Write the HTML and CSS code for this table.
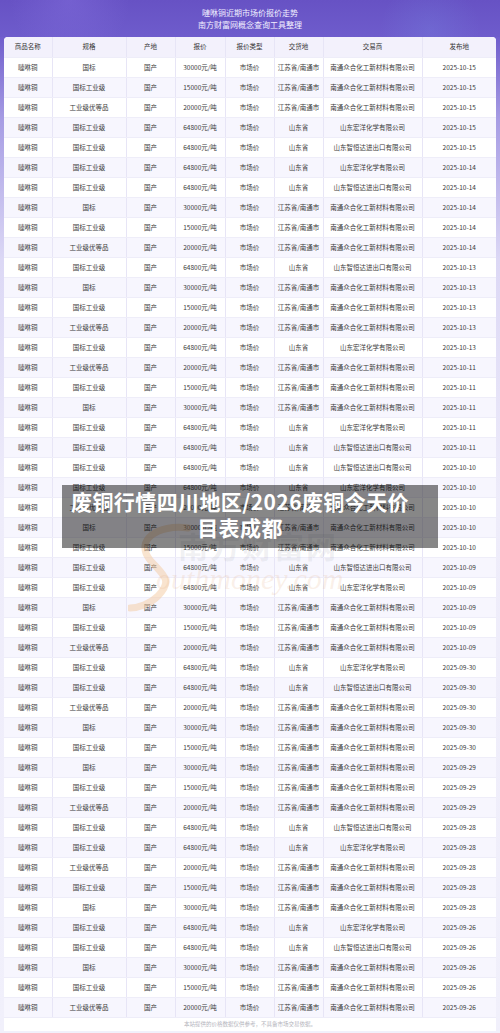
FILE: index.html
```html
<!DOCTYPE html>
<html lang="zh-CN">
<head>
<meta charset="utf-8">
<title>嗹咻铜近期市场价报价走势</title>
<link rel="stylesheet" href="styles.css">
</head>
<body>
<div class="page">
  <header class="hero">
    <div class="hero-line">嗹咻铜近期市场价报价走势</div>
    <div class="hero-line">南方财富网概念查询工具整理</div>
  </header>
  <section class="card">
    <table class="grid">
      <colgroup>
        <col class="c1"><col class="c2"><col class="c3"><col class="c4"><col class="c5"><col class="c6"><col class="c7"><col class="c8">
      </colgroup>
      <thead>
        <tr><th>商品名称</th><th>规格</th><th>产地</th><th>报价</th><th>报价类型</th><th>交货地</th><th>交易商</th><th>发布地</th></tr>
      </thead>
      <tbody>
        <tr><td>嗹咻铜</td><td>国标</td><td>国产</td><td>30000元/吨</td><td>市场价</td><td>江苏省/南通市</td><td>南通众合化工新材料有限公司</td><td>2025-10-15</td></tr>
        <tr><td>嗹咻铜</td><td>国标工业级</td><td>国产</td><td>15000元/吨</td><td>市场价</td><td>江苏省/南通市</td><td>南通众合化工新材料有限公司</td><td>2025-10-15</td></tr>
        <tr><td>嗹咻铜</td><td>工业级优等品</td><td>国产</td><td>20000元/吨</td><td>市场价</td><td>江苏省/南通市</td><td>南通众合化工新材料有限公司</td><td>2025-10-15</td></tr>
        <tr><td>嗹咻铜</td><td>国标工业级</td><td>国产</td><td>64800元/吨</td><td>市场价</td><td>山东省</td><td>山东宏洋化学有限公司</td><td>2025-10-15</td></tr>
        <tr><td>嗹咻铜</td><td>国标工业级</td><td>国产</td><td>64800元/吨</td><td>市场价</td><td>山东省</td><td>山东智恒达进出口有限公司</td><td>2025-10-15</td></tr>
        <tr><td>嗹咻铜</td><td>国标工业级</td><td>国产</td><td>64800元/吨</td><td>市场价</td><td>山东省</td><td>山东宏洋化学有限公司</td><td>2025-10-14</td></tr>
        <tr><td>嗹咻铜</td><td>国标工业级</td><td>国产</td><td>64800元/吨</td><td>市场价</td><td>山东省</td><td>山东智恒达进出口有限公司</td><td>2025-10-14</td></tr>
        <tr><td>嗹咻铜</td><td>国标</td><td>国产</td><td>30000元/吨</td><td>市场价</td><td>江苏省/南通市</td><td>南通众合化工新材料有限公司</td><td>2025-10-14</td></tr>
        <tr><td>嗹咻铜</td><td>国标工业级</td><td>国产</td><td>15000元/吨</td><td>市场价</td><td>江苏省/南通市</td><td>南通众合化工新材料有限公司</td><td>2025-10-14</td></tr>
        <tr><td>嗹咻铜</td><td>工业级优等品</td><td>国产</td><td>20000元/吨</td><td>市场价</td><td>江苏省/南通市</td><td>南通众合化工新材料有限公司</td><td>2025-10-14</td></tr>
        <tr><td>嗹咻铜</td><td>国标工业级</td><td>国产</td><td>64800元/吨</td><td>市场价</td><td>山东省</td><td>山东智恒达进出口有限公司</td><td>2025-10-13</td></tr>
        <tr><td>嗹咻铜</td><td>国标</td><td>国产</td><td>30000元/吨</td><td>市场价</td><td>江苏省/南通市</td><td>南通众合化工新材料有限公司</td><td>2025-10-13</td></tr>
        <tr><td>嗹咻铜</td><td>国标工业级</td><td>国产</td><td>15000元/吨</td><td>市场价</td><td>江苏省/南通市</td><td>南通众合化工新材料有限公司</td><td>2025-10-13</td></tr>
        <tr><td>嗹咻铜</td><td>工业级优等品</td><td>国产</td><td>20000元/吨</td><td>市场价</td><td>江苏省/南通市</td><td>南通众合化工新材料有限公司</td><td>2025-10-13</td></tr>
        <tr><td>嗹咻铜</td><td>国标工业级</td><td>国产</td><td>64800元/吨</td><td>市场价</td><td>山东省</td><td>山东宏洋化学有限公司</td><td>2025-10-13</td></tr>
        <tr><td>嗹咻铜</td><td>工业级优等品</td><td>国产</td><td>20000元/吨</td><td>市场价</td><td>江苏省/南通市</td><td>南通众合化工新材料有限公司</td><td>2025-10-11</td></tr>
        <tr><td>嗹咻铜</td><td>国标工业级</td><td>国产</td><td>15000元/吨</td><td>市场价</td><td>江苏省/南通市</td><td>南通众合化工新材料有限公司</td><td>2025-10-11</td></tr>
        <tr><td>嗹咻铜</td><td>国标</td><td>国产</td><td>30000元/吨</td><td>市场价</td><td>江苏省/南通市</td><td>南通众合化工新材料有限公司</td><td>2025-10-11</td></tr>
        <tr><td>嗹咻铜</td><td>国标工业级</td><td>国产</td><td>64800元/吨</td><td>市场价</td><td>山东省</td><td>山东宏洋化学有限公司</td><td>2025-10-11</td></tr>
        <tr><td>嗹咻铜</td><td>国标工业级</td><td>国产</td><td>64800元/吨</td><td>市场价</td><td>山东省</td><td>山东智恒达进出口有限公司</td><td>2025-10-11</td></tr>
        <tr><td>嗹咻铜</td><td>国标工业级</td><td>国产</td><td>64800元/吨</td><td>市场价</td><td>山东省</td><td>山东智恒达进出口有限公司</td><td>2025-10-10</td></tr>
        <tr><td>嗹咻铜</td><td>国标工业级</td><td>国产</td><td>64800元/吨</td><td>市场价</td><td>山东省</td><td>山东宏洋化学有限公司</td><td>2025-10-10</td></tr>
        <tr><td>嗹咻铜</td><td>工业级优等品</td><td>国产</td><td>20000元/吨</td><td>市场价</td><td>江苏省/南通市</td><td>南通众合化工新材料有限公司</td><td>2025-10-10</td></tr>
        <tr><td>嗹咻铜</td><td>国标</td><td>国产</td><td>30000元/吨</td><td>市场价</td><td>江苏省/南通市</td><td>南通众合化工新材料有限公司</td><td>2025-10-10</td></tr>
        <tr><td>嗹咻铜</td><td>国标工业级</td><td>国产</td><td>15000元/吨</td><td>市场价</td><td>江苏省/南通市</td><td>南通众合化工新材料有限公司</td><td>2025-10-10</td></tr>
        <tr><td>嗹咻铜</td><td>国标工业级</td><td>国产</td><td>64800元/吨</td><td>市场价</td><td>山东省</td><td>山东智恒达进出口有限公司</td><td>2025-10-09</td></tr>
        <tr><td>嗹咻铜</td><td>国标工业级</td><td>国产</td><td>64800元/吨</td><td>市场价</td><td>山东省</td><td>山东宏洋化学有限公司</td><td>2025-10-09</td></tr>
        <tr><td>嗹咻铜</td><td>国标</td><td>国产</td><td>30000元/吨</td><td>市场价</td><td>江苏省/南通市</td><td>南通众合化工新材料有限公司</td><td>2025-10-09</td></tr>
        <tr><td>嗹咻铜</td><td>国标工业级</td><td>国产</td><td>15000元/吨</td><td>市场价</td><td>江苏省/南通市</td><td>南通众合化工新材料有限公司</td><td>2025-10-09</td></tr>
        <tr><td>嗹咻铜</td><td>工业级优等品</td><td>国产</td><td>20000元/吨</td><td>市场价</td><td>江苏省/南通市</td><td>南通众合化工新材料有限公司</td><td>2025-10-09</td></tr>
        <tr><td>嗹咻铜</td><td>国标工业级</td><td>国产</td><td>64800元/吨</td><td>市场价</td><td>山东省</td><td>山东宏洋化学有限公司</td><td>2025-09-30</td></tr>
        <tr><td>嗹咻铜</td><td>国标工业级</td><td>国产</td><td>64800元/吨</td><td>市场价</td><td>山东省</td><td>山东智恒达进出口有限公司</td><td>2025-09-30</td></tr>
        <tr><td>嗹咻铜</td><td>工业级优等品</td><td>国产</td><td>20000元/吨</td><td>市场价</td><td>江苏省/南通市</td><td>南通众合化工新材料有限公司</td><td>2025-09-30</td></tr>
        <tr><td>嗹咻铜</td><td>国标</td><td>国产</td><td>30000元/吨</td><td>市场价</td><td>江苏省/南通市</td><td>南通众合化工新材料有限公司</td><td>2025-09-30</td></tr>
        <tr><td>嗹咻铜</td><td>国标工业级</td><td>国产</td><td>15000元/吨</td><td>市场价</td><td>江苏省/南通市</td><td>南通众合化工新材料有限公司</td><td>2025-09-30</td></tr>
        <tr><td>嗹咻铜</td><td>国标</td><td>国产</td><td>30000元/吨</td><td>市场价</td><td>江苏省/南通市</td><td>南通众合化工新材料有限公司</td><td>2025-09-29</td></tr>
        <tr><td>嗹咻铜</td><td>国标工业级</td><td>国产</td><td>15000元/吨</td><td>市场价</td><td>江苏省/南通市</td><td>南通众合化工新材料有限公司</td><td>2025-09-29</td></tr>
        <tr><td>嗹咻铜</td><td>工业级优等品</td><td>国产</td><td>20000元/吨</td><td>市场价</td><td>江苏省/南通市</td><td>南通众合化工新材料有限公司</td><td>2025-09-29</td></tr>
        <tr><td>嗹咻铜</td><td>国标工业级</td><td>国产</td><td>64800元/吨</td><td>市场价</td><td>山东省</td><td>山东智恒达进出口有限公司</td><td>2025-09-28</td></tr>
        <tr><td>嗹咻铜</td><td>国标工业级</td><td>国产</td><td>64800元/吨</td><td>市场价</td><td>山东省</td><td>山东宏洋化学有限公司</td><td>2025-09-28</td></tr>
        <tr><td>嗹咻铜</td><td>工业级优等品</td><td>国产</td><td>20000元/吨</td><td>市场价</td><td>江苏省/南通市</td><td>南通众合化工新材料有限公司</td><td>2025-09-28</td></tr>
        <tr><td>嗹咻铜</td><td>国标工业级</td><td>国产</td><td>15000元/吨</td><td>市场价</td><td>江苏省/南通市</td><td>南通众合化工新材料有限公司</td><td>2025-09-28</td></tr>
        <tr><td>嗹咻铜</td><td>国标</td><td>国产</td><td>30000元/吨</td><td>市场价</td><td>江苏省/南通市</td><td>南通众合化工新材料有限公司</td><td>2025-09-28</td></tr>
        <tr><td>嗹咻铜</td><td>国标工业级</td><td>国产</td><td>64800元/吨</td><td>市场价</td><td>山东省</td><td>山东宏洋化学有限公司</td><td>2025-09-26</td></tr>
        <tr><td>嗹咻铜</td><td>国标工业级</td><td>国产</td><td>64800元/吨</td><td>市场价</td><td>山东省</td><td>山东智恒达进出口有限公司</td><td>2025-09-26</td></tr>
        <tr><td>嗹咻铜</td><td>国标</td><td>国产</td><td>30000元/吨</td><td>市场价</td><td>江苏省/南通市</td><td>南通众合化工新材料有限公司</td><td>2025-09-26</td></tr>
        <tr><td>嗹咻铜</td><td>国标工业级</td><td>国产</td><td>15000元/吨</td><td>市场价</td><td>江苏省/南通市</td><td>南通众合化工新材料有限公司</td><td>2025-09-26</td></tr>
        <tr><td>嗹咻铜</td><td>工业级优等品</td><td>国产</td><td>20000元/吨</td><td>市场价</td><td>江苏省/南通市</td><td>南通众合化工新材料有限公司</td><td>2025-09-26</td></tr>
      </tbody>
    </table>
    <footer class="note">本站提供的价格数据仅供参考，不具备市场交易依据。</footer>
  </section>

  <div class="watermark" aria-hidden="true">
    <svg class="wm-swoosh" width="70" height="90" viewBox="0 0 70 90">
      <path d="M60 6 C30 2 6 18 22 38 C34 52 46 58 30 74 C22 82 10 86 2 86" fill="none" stroke="#f3c9a0" stroke-width="7" stroke-linecap="round" opacity="0.5"/>
    </svg>
    <div class="wm-cn">南方财富网</div>
    <div class="wm-en">outhmoney.com</div>
  </div>

  <div class="banner">
    <h1 class="banner-title">废铜行情四川地区/2026废铜今天价目表成都</h1>
  </div>
</div>
</body>
</html>
```
FILE: styles.css
```css
html, body {
  margin: 0;
  padding: 0;
}
body {
  width: 500px;
  height: 1033px;
  overflow: hidden;
  font-family: "Noto Sans CJK SC", "Noto Sans", sans-serif;
  background: linear-gradient(180deg, #6a56c6 0px, #7260cd 40px, #a79de4 120px, #dcd8f5 260px, #eeecfa 500px, #f1f0fb 1033px);
}
.page {
  position: relative;
  width: 500px;
  height: 1033px;
}
.hero {
  height: 37px;
  box-sizing: border-box;
  padding-top: 7px;
  text-align: center;
  color: #f2f0ff;
  font-size: 8px;
  line-height: 11.5px;
  background:
    radial-gradient(circle at 70px 0px, rgba(140,120,230,0.35) 0, rgba(140,120,230,0) 60px),
    radial-gradient(circle at 430px 30px, rgba(120,140,230,0.25) 0, rgba(120,140,230,0) 50px),
    linear-gradient(180deg, #6752c4 0%, #6e5ccc 100%);
}
.hero-line {
  white-space: nowrap;
}
.card {
  margin: 0 4px;
  background: #ffffff;
  border-radius: 4px 4px 0 0;
  overflow: hidden;
}
.grid {
  width: 492px;
  border-collapse: collapse;
  table-layout: fixed;
  font-size: 6.5px;
  color: #3a3a3a;
}
.c1 { width: 48px; }
.c2 { width: 74px; }
.c3 { width: 49px; }
.c4 { width: 50px; }
.c5 { width: 49px; }
.c6 { width: 49px; }
.c7 { width: 99px; }
.c8 { width: 74px; }
.grid th,
.grid td {
  height: 20px;
  padding: 0;
  box-sizing: border-box;
  text-align: center;
  vertical-align: middle;
  white-space: nowrap;
  overflow: hidden;
  border-left: 1px solid #e7e5f6;
  border-bottom: 1px solid #eeedf9;
  font-weight: normal;
  line-height: 19px;
}
.grid th:first-child,
.grid td:first-child {
  border-left: none;
}
.grid thead th {
  background: #f3f1fc;
  color: #333333;
}
.grid tbody tr:nth-child(even) td {
  background: #f7f6fe;
}
.note {
  height: 13px;
  line-height: 13px;
  text-align: center;
  font-size: 5.5px;
  color: #b4b4bc;
  background: #ffffff;
}
.watermark {
  position: absolute;
  left: 128px;
  top: 520px;
  width: 230px;
  height: 90px;
  pointer-events: none;
}
.wm-swoosh {
  position: absolute;
  left: 0;
  top: 2px;
}
.wm-cn {
  position: absolute;
  left: 50px;
  top: 8px;
  font-size: 30px;
  line-height: 34px;
  letter-spacing: 2px;
  color: rgba(150, 150, 165, 0.14);
  font-weight: bold;
}
.wm-en {
  position: absolute;
  left: 28px;
  top: 42px;
  font-family: "Liberation Serif", serif;
  font-style: italic;
  font-size: 30px;
  line-height: 34px;
  color: rgba(230, 180, 140, 0.2);
}
.banner {
  position: absolute;
  left: 62px;
  top: 485px;
  width: 376px;
  height: 63px;
  box-sizing: border-box;
  padding: 0 20px 5px 0;
  background: rgba(0, 0, 0, 0.47);
  display: flex;
  align-items: center;
  justify-content: center;
}
.banner-title {
  margin: 0;
  width: 346px;
  text-align: center;
  color: #ffffff;
  font-size: 21px;
  line-height: 26px;
  letter-spacing: 0.4px;
  font-weight: bold;
}
```
